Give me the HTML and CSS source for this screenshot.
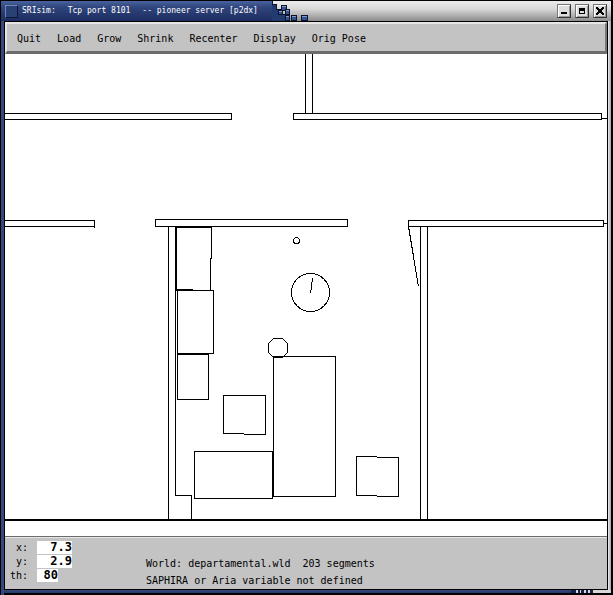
FILE: index.html
```html
<!DOCTYPE html>
<html lang="en">
<head>
<meta charset="utf-8">
<title>SRIsim</title>
<link rel="stylesheet" href="styles.css">
</head>
<body>
<div class="window">
  <header class="titlebar">
    <div class="title">
      <button class="sysmenu" type="button" aria-label="Window menu"></button>
      <span>SRIsim:</span><span>Tcp port 8101</span><span>-- pioneer server [p2dx]</span>
    </div>
    <svg class="blocks" width="40" height="20" aria-hidden="true" shape-rendering="crispEdges">
      <path fill="#233a70" d="M0 0v4h5v5h4v5h6v6H0z"/>
      <path fill="none" stroke="#0a1230" d="M0.500 0v3.500h4v5h5v5h5v6"/>
      <g fill="#34558c" stroke="#0a1230">
        <rect x="9.500" y="4.500" width="5" height="5"/>
        <rect x="6.500" y="9.500" width="4" height="4"/>
        <rect x="13.500" y="8.500" width="4" height="5"/>
        <rect x="13.500" y="14.500" width="4" height="5"/>
        <rect x="19.500" y="14.500" width="5" height="5"/>
        <rect x="29.500" y="14.500" width="6" height="5"/>
      </g>
      <path stroke="#7f9dc8" d="M10 5.500h4M7 10.500h3M14 9.500h3M14 15.500h3M20 15.500h4M30 15.500h5"/>
    </svg>
    <div class="controls">
      <button type="button" aria-label="Minimize"><svg width="10" height="10" shape-rendering="crispEdges"><path d="M2 6h6v2H2z"/></svg></button>
      <button type="button" aria-label="Maximize"><svg width="10" height="10" shape-rendering="crispEdges"><path fill-rule="evenodd" d="M2 2h6v6H2zM3 5v2h4V5z"/></svg></button>
      <button type="button" aria-label="Close"><svg width="10" height="10" shape-rendering="crispEdges"><path d="M1 1h2v1h1v1h2V2h1V1h2v2H8v1H7v2h1v1h1v2H7V8H6V7H4v1H3v1H1V7h1V6h1V4H2V3H1z"/></svg></button>
    </div>
  </header>
  <main class="client">
    <nav class="menubar">
      <button type="button">Quit</button>
      <button type="button">Load</button>
      <button type="button">Grow</button>
      <button type="button">Shrink</button>
      <button type="button">Recenter</button>
      <button type="button">Display</button>
      <button type="button">Orig Pose</button>
    </nav>
    <div class="world">
      <svg class="map" role="img" aria-label="World map" shape-rendering="crispEdges">
        <g transform="translate(-4.500 -53.500)" fill="none" stroke="#000">
          <path d="M305 50V113M312 50V113"/>
          <path d="M0 113H231V119H0"/>
          <path d="M293 113H601V119H293ZM601 118H2000"/>
          <path d="M0 220H94V227.500M94 226H0"/>
          <path d="M155 219H347V226H155Z"/>
          <path d="M408 220H603V226H408ZM603 223H2000"/>
          <path d="M408 226L418 286"/>
          <path d="M420 226V519M427 226V519"/>
          <path d="M168 226V519M175 226V495H191V519"/>
          <path d="M176 290V227H211V258H210V290M176 289H192"/>
          <path d="M177 290H213V353H177Z"/>
          <path d="M177 354H208V399H177Z"/>
          <path d="M243.500 433H223V395H265V434H243.500"/>
          <path d="M194 451H272V498H194Z"/>
          <path d="M273 356H335V496H273Z"/>
          <path d="M376.500 456H356V495H376.500M376.500 457H398V496H376.500"/>
          <path d="M273 338H282L287 343V352L282 357H273L268 352V343Z"/>
          <circle cx="310" cy="292" r="19"/>
          <path d="M310 293L312 278"/>
          <circle cx="296" cy="240" r="3"/>
          <path stroke-width="2" d="M0 519.500H2000"/>
        </g>
      </svg>
    </div>
    <footer class="status">
      <form class="pose">
        <label for="px">x:</label><input id="px" class="wide" value="7.3" readonly>
        <label for="py">y:</label><input id="py" class="wide" value="2.9" readonly>
        <label for="th">th:</label><input id="th" class="narrow" value="80" readonly>
      </form>
      <div class="messages">
        <p>World: departamental.wld  203 segments</p>
        <p>SAPHIRA or Aria variable not defined</p>
      </div>
    </footer>
  </main>
  <svg class="grip" width="40" height="4" aria-hidden="true" shape-rendering="crispEdges">
    <path fill="#d8d8d8" d="M4 0h36v3H4z"/>
    <path fill="#16204a" d="M0 0h5v3H0zM7 0h2v3H7zM10 0h3v3h-3zM15 0h2v3h-2zM19 0h3v3h-3z"/>
  </svg>
</div>
</body>
</html>
```
FILE: styles.css
```css
* {
  box-sizing: border-box;
}

body {
  margin: 0;
  background: #000;
  color: #000;
  font: 10px/16px "DejaVu Sans Mono", monospace;
}

button {
  margin: 0;
  padding: 0;
  border: 0;
  background: none;
  color: inherit;
  font: inherit;
}

.window {
  position: relative;
  display: flex;
  flex-direction: column;
  height: 100vh;
  padding: 1px 5px 5px 4px;
  background:
    linear-gradient(#35477c, #35477c) 1px 100% / 3px calc(100% - 2px) no-repeat,
    linear-gradient(90deg, #f0f0f0, #a0a0a0) calc(100% - 2px) 1px / 3px calc(100% - 3px) no-repeat,
    linear-gradient(#35477c, #26376c) 1px calc(100% - 2px) / calc(100% - 3px) 3px no-repeat,
    #000;
}

.titlebar {
  display: flex;
  flex: none;
  height: 20px;
  margin: 0 -3px;
  background: linear-gradient(#ececec, #d8d8d8 40%, #8c8c8c);
}

.title {
  display: flex;
  align-items: center;
  gap: 12px;
  width: 271px;
  padding-left: 4px;
  background: linear-gradient(#4a639c, #30467e 30%, #1c2c60);
  color: #fff;
  font-size: 8px;
  white-space: nowrap;
}

.sysmenu {
  width: 13px;
  height: 13px;
  margin-right: -8px;
  border: 1px solid;
  border-color: #6d87b8 #0c1638 #0c1638 #6d87b8;
  background: #2a4176;
}

.blocks {
  flex: none;
}

.controls {
  display: flex;
  align-items: center;
  gap: 4px;
  margin-left: auto;
  padding-right: 4px;
}

.controls button {
  display: grid;
  place-items: center;
  width: 14px;
  height: 14px;
  border: 1px solid;
  border-color: #777 #333 #333 #777;
  background: #dedede;
  box-shadow: inset 1px 1px #fff, inset -1px -1px #999;
}

.client {
  display: flex;
  flex: 1;
  flex-direction: column;
  min-height: 0;
  border: 1px solid #000;
}

.menubar {
  display: flex;
  flex: none;
  align-items: center;
  gap: 16px;
  height: 32px;
  padding: 2px 0 0 10px;
  border: solid;
  border-width: 2px 2px 3px;
  border-color: #e6e6e6 #777 #6c6c6c #e6e6e6;
  background: #c3c3c3;
}

.world {
  flex: 1;
  min-height: 0;
  background: #fff;
}

.map {
  display: block;
  width: 100%;
  height: 100%;
}

.status {
  display: flex;
  flex: none;
  gap: 74px;
  height: 53px;
  padding: 4px 5px 0;
  border-top: 1px solid #6c6c6c;
  background: #c3c3c3;
  box-shadow: inset 0 1px #e6e6e6;
}

.pose {
  display: grid;
  grid-template-columns: 18px 35px;
  grid-auto-rows: 13px;
  align-content: start;
  gap: 1px 9px;
}

.pose label {
  line-height: 13px;
  text-align: right;
}

.pose input {
  height: 13px;
  margin: 0;
  padding: 0;
  border: 0;
  background: #fff;
  color: #000;
  font: bold 12px/13px "DejaVu Sans Mono", monospace;
  text-align: right;
}

.wide {
  width: 35px;
}

.narrow {
  width: 21px;
}

.messages {
  padding-top: 14px;
  line-height: 17px;
}

.messages p {
  margin: 0;
  white-space: pre;
}

.grip {
  position: absolute;
  right: 2px;
  bottom: 1px;
}
```
